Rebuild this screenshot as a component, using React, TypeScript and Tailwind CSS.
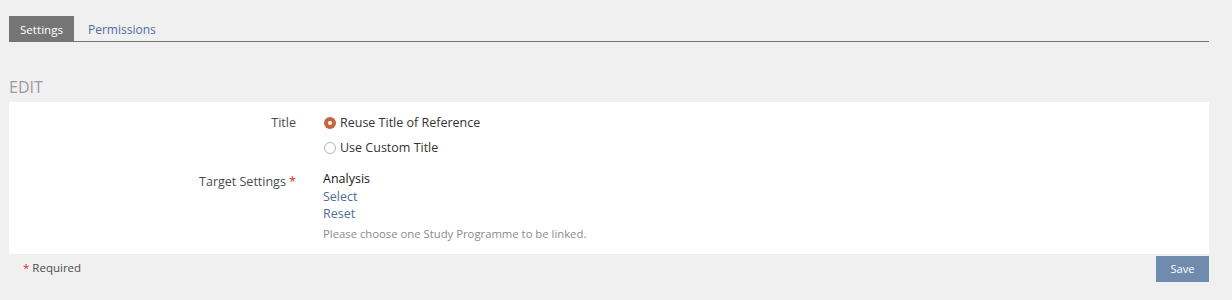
export default function App() {
  return (
    <div className="min-h-[300px] bg-[#f0f0f0] pl-[9px] pr-[23px] pt-[16px] font-['Open_Sans',sans-serif] text-[12.5px] text-[#161616]">
      <div className="flex h-[26px] items-stretch border-b border-[#757575]">
        <div className="flex items-center bg-[#757575] px-[11px] pt-[2px] text-[11.6px] text-white">Settings</div>
        <div className="flex items-center px-[14px] pt-[2px] text-[12px] text-[#4f6d98]">Permissions</div>
      </div>

      <h2 className="mt-[36px] h-[24px] text-[16px] leading-[18px] text-[#9a9a9a]">EDIT</h2>

      <div className="bg-white pb-[12px] pt-[12px]">
        <div className="flex">
          <div className="w-[287px] text-right leading-[18px] text-[#4c4c4c]">Title</div>
          <div className="ml-[28px] flex flex-col gap-[7px]">
            <label className="flex h-[18px] items-center gap-[4px]">
              <span className="grid h-[12px] w-[12px] place-items-center rounded-full bg-[#c8643c]">
                <span className="h-[4px] w-[4px] rounded-full bg-white" />
              </span>
              <span className="text-[#333]">Reuse Title of Reference</span>
            </label>
            <label className="flex h-[18px] items-center gap-[4px]">
              <span className="h-[12px] w-[12px] rounded-full border border-[#b5b5b5] bg-white" />
              <span className="text-[#333]">Use Custom Title</span>
            </label>
          </div>
        </div>

        <div className="mt-[13px] flex">
          <div className="w-[287px] pt-[3px] text-right leading-[18px] text-[#4c4c4c]">
            Target Settings <span className="text-[#e52a2a]">*</span>
          </div>
          <div className="ml-[27px] flex flex-col leading-[17.5px]">
            <span className="text-[#161616]">Analysis</span>
            <span className="text-[#4f6d98]">Select</span>
            <span className="text-[#4f6d98]">Reset</span>
            <span className="mt-[2px] text-[11.3px] text-[#8b8b8b]">Please choose one Study Programme to be linked.</span>
          </div>
        </div>
      </div>

      <div className="flex items-start justify-between pt-[2px]">
        <div className="mt-[3px] pl-[14px] text-[11.5px] text-[#4c4c4c]">
          <span className="text-[#e52a2a]">*</span> Required
        </div>
        <button className="h-[26px] w-[53px] bg-[#6f8bae] text-[11px] text-white">Save</button>
      </div>
    </div>
  );
}
